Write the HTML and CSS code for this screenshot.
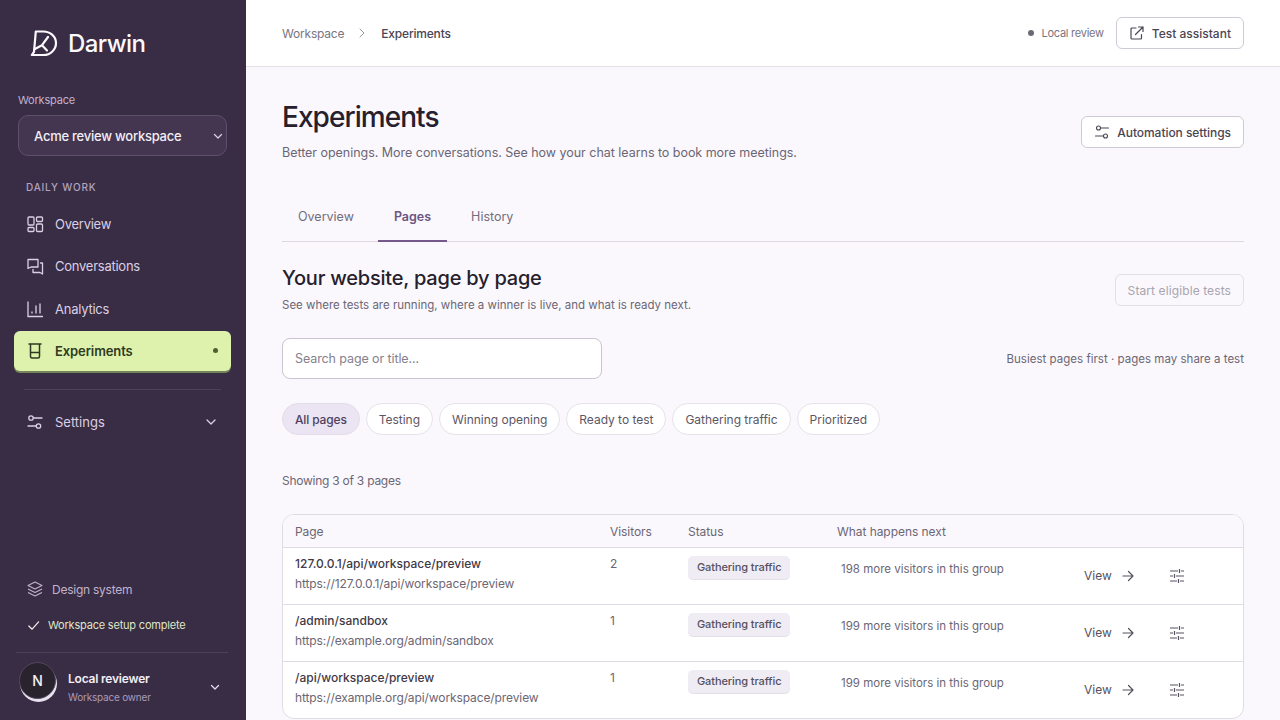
FILE: index.html
```html
<!DOCTYPE html>
<html lang="en">
<head>
<meta charset="utf-8">
<title>Experiments</title>
<link rel="stylesheet" href="styles.css">
</head>
<body>
<div class="app">
  <aside class="sidebar">
    <div class="brand">
      <svg class="logo" viewBox="0 0 28 28" fill="none" stroke="currentColor" stroke-width="2.2" stroke-linecap="round" stroke-linejoin="round"><path d="M5.800 2.500h7.500C20.500 2.500 26 7.500 26 14c0 6.500-5.500 12-12.500 12H1.800l2.200-3.200z"/><path d="M4.800 20 12 16.200 18 8M12 16.200l5 5.300"/></svg>
      <span class="brand-name">Darwin</span>
    </div>
    <div class="ws-label">Workspace</div>
    <div class="ws-select">
      <span>Acme review workspace</span>
      <svg class="ws-chev" viewBox="0 0 12 12" fill="none" stroke="currentColor" stroke-width="1.300" stroke-linecap="round" stroke-linejoin="round"><path d="M2.500 4.500 6 8l3.500-3.500"/></svg>
    </div>
    <div class="nav-group">DAILY WORK</div>
    <nav class="nav">
      <a class="nav-item"><svg class="nav-icon" viewBox="0 0 18 18" fill="none" stroke="currentColor" stroke-width="1.300"><rect x="2" y="2" width="6" height="8" rx="1"/><rect x="10.500" y="2" width="6" height="4.500" rx="1"/><rect x="2" y="12.500" width="6" height="4" rx="1"/><rect x="10.500" y="9" width="6" height="7.500" rx="1"/></svg><span>Overview</span></a>
      <a class="nav-item"><svg class="nav-icon" viewBox="0 0 18 18" fill="none" stroke="currentColor" stroke-width="1.300" stroke-linecap="round" stroke-linejoin="round"><path d="M2 2.500h10v7.500H5l-3 1.500z"/><path d="M14.500 6h2v11l-2.500-1.500H7v-3"/></svg><span>Conversations</span></a>
      <a class="nav-item"><svg class="nav-icon" viewBox="0 0 18 18" fill="none" stroke="currentColor" stroke-width="1.300" stroke-linecap="round"><path d="M2 2v14.500h14.500M6 13v-1M10 13V6M14 13V4"/></svg><span>Analytics</span></a>
      <a class="nav-item active"><svg class="nav-icon" viewBox="0 0 18 18" fill="none" stroke="currentColor" stroke-width="1.500" stroke-linecap="round" stroke-linejoin="round"><path d="M3 2h12M4.500 2v12.500a1.500 1.500 0 0 0 1.500 1.500h6a1.500 1.500 0 0 0 1.500-1.500V2M4.500 10.500h9"/></svg><span>Experiments</span><i class="nav-dot"></i></a>
    </nav>
    <div class="side-rule"></div>
    <a class="nav-item settings"><svg class="nav-icon" viewBox="0 0 18 18" fill="none" stroke="currentColor" stroke-width="1.300" stroke-linecap="round"><circle cx="5" cy="5" r="2.200"/><path d="M7.500 5h8.500M2 13h8"/><circle cx="12.500" cy="13" r="2.200"/></svg><span>Settings</span><svg class="set-chev" viewBox="0 0 12 12" fill="none" stroke="currentColor" stroke-width="1.300" stroke-linecap="round" stroke-linejoin="round"><path d="M2 4 6 8l4-4"/></svg></a>
    <div class="side-bottom">
      <a class="design"><svg class="design-icon" viewBox="0 0 18 18" fill="none" stroke="currentColor" stroke-width="1.100" stroke-linejoin="round"><path d="M9 2l7 3.500L9 9 2 5.500z"/><path d="M2 9l7 3.500L16 9M2 12.500 9 16l7-3.500"/></svg><span>Design system</span></a>
      <div class="setup"><svg class="setup-icon" viewBox="0 0 14 14" fill="none" stroke="currentColor" stroke-width="1.300" stroke-linecap="round" stroke-linejoin="round"><path d="M2 7.500 5.500 11 12.500 3"/></svg><span>Workspace setup complete</span></div>
      <div class="user">
        <div class="avatar"><span>N</span></div>
        <div class="user-text"><div class="user-name">Local reviewer</div><div class="user-role">Workspace owner</div></div>
        <svg class="user-chev" viewBox="0 0 12 12" fill="none" stroke="currentColor" stroke-width="1.300" stroke-linecap="round" stroke-linejoin="round"><path d="M2.500 4.500 6 8l3.500-3.500"/></svg>
      </div>
    </div>
  </aside>
  <div class="main">
    <header class="topbar">
      <div class="crumbs"><span>Workspace</span><svg class="crumb-sep" viewBox="0 0 10 10" fill="none" stroke="currentColor" stroke-width="1" stroke-linecap="round" stroke-linejoin="round"><path d="M3 1l4 4-4 4"/></svg><b>Experiments</b></div>
      <div class="top-right">
        <span class="local"><i></i>Local review</span>
        <a class="btn"><svg class="btn-icon" viewBox="0 0 16 16" fill="none" stroke="currentColor" stroke-width="1.200" stroke-linecap="round" stroke-linejoin="round"><path d="M7 3H3a1 1 0 0 0-1 1v9a1 1 0 0 0 1 1h8.500a1 1 0 0 0 1-1V9.500M6.500 9.500 14 2M9.500 2H14v4.500"/></svg>Test assistant</a>
      </div>
    </header>
    <main class="content">
      <div class="page-head">
        <div>
          <h1>Experiments</h1>
          <p class="lede">Better openings. More conversations. See how your chat learns to book more meetings.</p>
        </div>
        <a class="btn btn-auto"><svg class="btn-icon" viewBox="0 0 16 16" fill="none" stroke="currentColor" stroke-width="1.100" stroke-linecap="round"><circle cx="4.500" cy="4" r="2"/><path d="M7 4h7.500M1.500 12H9"/><circle cx="11.500" cy="12" r="2"/></svg>Automation settings</a>
      </div>
      <div class="tabs"><a class="tab">Overview</a><a class="tab on">Pages</a><a class="tab">History</a></div>
      <div class="sec-head">
        <div>
          <h2>Your website, page by page</h2>
          <p class="sec-sub">See where tests are running, where a winner is live, and what is ready next.</p>
        </div>
        <a class="btn btn-off">Start eligible tests</a>
      </div>
      <div class="tools">
        <div class="search">Search page or title...</div>
        <span class="sort">Busiest pages first · pages may share a test</span>
      </div>
      <div class="chips"><a class="chip on">All pages</a><a class="chip">Testing</a><a class="chip">Winning opening</a><a class="chip">Ready to test</a><a class="chip">Gathering traffic</a><a class="chip">Prioritized</a></div>
      <div class="count">Showing 3 of 3 pages</div>
      <div class="table">
        <div class="row head"><span>Page</span><span>Visitors</span><span>Status</span><span>What happens next</span></div>
        <div class="row">
          <div><div class="p-name">127.0.0.1/api/workspace/preview</div><div class="p-url">https://127.0.0.1/api/workspace/preview</div></div>
          <div class="num">2</div><div><span class="badge">Gathering traffic</span></div><div class="next">198 more visitors in this group</div>
          <a class="view">View<svg class="arrow" viewBox="0 0 14 14" fill="none" stroke="currentColor" stroke-width="1.200" stroke-linecap="round" stroke-linejoin="round"><path d="M2 7h10M7.500 2.500 12 7l-4.500 4.500"/></svg></a>
          <svg class="tune" viewBox="0 0 14 14" fill="none" stroke="currentColor" stroke-width="1.200"><path d="M0 2h8M11 2h3M0 7h3M6 7h8M0 12h7M10 12h4M9.500 0v4M4.500 5v4M8.500 10v4"/></svg>
        </div>
        <div class="row">
          <div><div class="p-name">/admin/sandbox</div><div class="p-url">https://example.org/admin/sandbox</div></div>
          <div class="num">1</div><div><span class="badge">Gathering traffic</span></div><div class="next">199 more visitors in this group</div>
          <a class="view">View<svg class="arrow" viewBox="0 0 14 14" fill="none" stroke="currentColor" stroke-width="1.200" stroke-linecap="round" stroke-linejoin="round"><path d="M2 7h10M7.500 2.500 12 7l-4.500 4.500"/></svg></a>
          <svg class="tune" viewBox="0 0 14 14" fill="none" stroke="currentColor" stroke-width="1.200"><path d="M0 2h8M11 2h3M0 7h3M6 7h8M0 12h7M10 12h4M9.500 0v4M4.500 5v4M8.500 10v4"/></svg>
        </div>
        <div class="row">
          <div><div class="p-name">/api/workspace/preview</div><div class="p-url">https://example.org/api/workspace/preview</div></div>
          <div class="num">1</div><div><span class="badge">Gathering traffic</span></div><div class="next">199 more visitors in this group</div>
          <a class="view">View<svg class="arrow" viewBox="0 0 14 14" fill="none" stroke="currentColor" stroke-width="1.200" stroke-linecap="round" stroke-linejoin="round"><path d="M2 7h10M7.500 2.500 12 7l-4.500 4.500"/></svg></a>
          <svg class="tune" viewBox="0 0 14 14" fill="none" stroke="currentColor" stroke-width="1.200"><path d="M0 2h8M11 2h3M0 7h3M6 7h8M0 12h7M10 12h4M9.500 0v4M4.500 5v4M8.500 10v4"/></svg>
        </div>
      </div>
    </main>
  </div>
</div>
</body>
</html>
```
FILE: styles.css
```css
* { box-sizing: border-box; }
html, body { margin: 0; height: 720px; overflow: hidden; }
body { font-family: Inter, "Noto Sans", sans-serif; background: #faf8fd; color: #2a2433; }
.app { display: flex; height: 720px; }
.sidebar { width: 246px; flex: none; background: #392c45; color: #d6cbe0; display: flex; flex-direction: column; padding: 0 15px 0 14px; }
.brand { display: flex; align-items: center; gap: 10px; height: 30px; margin: 28px 0 0 16px; color: #fbf9fd; }
.logo { width: 28px; height: 28px; }
.brand-name { font-size: 24px; font-weight: 500; letter-spacing: -0.6px; }
.ws-label { margin: 35px 0 0 4px; font-size: 11px; line-height: 14px; color: #c0b3cc; letter-spacing: -0.2px; }
.ws-select { margin: 8px 4px 0 4px; height: 41px; border: 1px solid #5e4f6c; border-radius: 10px; background: #443650; display: flex; align-items: center; justify-content: space-between; padding: 0 2px 0 15px; color: #f2eef6; font-size: 13px; font-weight: 500; letter-spacing: -0.24px; }
.ws-chev { width: 12px; height: 12px; color: #d6cbe0; }
.nav-group { margin: 25px 0 0 12px; font-size: 10px; line-height: 13px; font-weight: 500; letter-spacing: 0.8px; color: #b1a3be; }
.nav { margin-top: 8.500px; display: flex; flex-direction: column; }
.nav-item { display: flex; align-items: center; height: 42.500px; padding-left: 12px; font-size: 13px; color: #dad0e4; letter-spacing: -0.25px; }
.nav-icon { width: 18px; height: 18px; flex: none; margin-right: 11px; }
.nav-item.active { height: 40px; margin: 0.500px 0 1px; width: 217px; border-radius: 6px; background: #dff2ad; color: #2e3a22; font-weight: 600; box-shadow: 0 2px 0 #75855a; letter-spacing: -0.1px; }
.nav-dot { width: 5px; height: 5px; border-radius: 50%; background: #4c6131; margin-left: auto; margin-right: 13px; }
.side-rule { height: 1px; margin: 17px 10px 0; background: #4d4059; }
.nav-item.settings { margin-top: 11px; letter-spacing: 0; }
.set-chev { width: 12px; height: 12px; margin-left: auto; margin-right: 14px; }
.side-bottom { margin-top: auto; display: flex; flex-direction: column; }
.design { display: flex; align-items: center; padding-left: 12px; font-size: 12px; color: #c0b3cc; letter-spacing: -0.25px; }
.design-icon { width: 18px; height: 18px; margin-right: 8px; }
.setup { display: flex; align-items: center; margin-top: 20px; padding-left: 13px; font-size: 11px; color: #dfe6c6; letter-spacing: -0.2px; }
.setup-icon { width: 13px; height: 13px; margin-right: 8px; color: #f2f2ea; }
.user { margin: 20px 3px 0 2px; border-top: 1px solid #4d4059; height: 68px; display: flex; align-items: flex-start; padding: 0 0 0 3px; }
.avatar { width: 37px; height: 37px; margin-top: 9px; border-radius: 50%; background: #29232e; border: 1px solid #54475f; box-shadow: 1px 3px 0 #e8e1ee; display: flex; align-items: center; justify-content: center; color: #f4f1f6; font-size: 14px; font-weight: 500; flex: none; }
.user-text { margin: 18px 0 0 12px; flex: 1; }
.user-name { font-size: 12px; font-weight: 600; line-height: 16px; color: #f2eef6; letter-spacing: -0.2px; }
.user-role { font-size: 10px; line-height: 14px; margin-top: 3px; color: #ab9cb9; letter-spacing: -0.2px; }
.user-chev { width: 12px; height: 12px; margin: 28px 7px 0 0; color: #e4dcec; }
.main { flex: 1; min-width: 0; display: flex; flex-direction: column; }
.topbar { height: 67px; flex: none; background: #fff; border-bottom: 1px solid #e4e0e8; display: flex; align-items: center; justify-content: space-between; padding: 0 36px; }
.crumbs { display: flex; align-items: center; font-size: 12px; color: #7a7482; letter-spacing: -0.2px; }
.crumbs b { font-weight: 500; color: #4b4553; }
.crumb-sep { width: 10px; height: 10px; margin: 0 14px 0 13px; color: #9c96a3; }
.top-right { display: flex; align-items: center; gap: 12px; }
.local { display: flex; align-items: center; font-size: 11px; color: #7a7482; letter-spacing: -0.25px; }
.local i { width: 6px; height: 6px; border-radius: 50%; background: #6e6875; margin-right: 7px; }
.btn { display: flex; align-items: center; height: 32px; border: 1px solid #cfcad5; border-radius: 6px; background: #fff; padding: 0 12px; font-size: 12px; font-weight: 500; color: #4b4553; }
.btn-icon { width: 16px; height: 16px; margin-right: 7px; }
.content { flex: 1; padding: 0 36px; min-height: 0; }
.page-head { display: flex; justify-content: space-between; align-items: flex-start; padding-top: 33px; }
h1 { margin: 0; font-size: 28px; line-height: 34px; font-weight: 500; letter-spacing: -0.95px; color: #25202c; }
.lede { margin: 11px 0 0; font-size: 12.500px; line-height: 16px; color: #6c6674; letter-spacing: -0.03px; }
.btn-auto { margin-top: 16px; letter-spacing: -0.05px; }
.tabs { display: flex; gap: 8px; height: 48px; margin-top: 33px; border-bottom: 1px solid #ddd8e3; }
.tab { padding: 0 16px; height: 48px; line-height: 46px; font-size: 12.500px; color: #736d7b; }
.tab.on { color: #6d5481; font-weight: 600; border-bottom: 2px solid #75598a; }
.sec-head { display: flex; justify-content: space-between; align-items: flex-start; margin-top: 23px; }
h2 { margin: 0; font-size: 20px; line-height: 26px; font-weight: 500; letter-spacing: -0.22px; color: #25202c; }
.sec-sub { margin: 6px 0 0; font-size: 11.500px; line-height: 16px; color: #6c6674; }
.btn-off { margin-top: 9px; padding: 0 12px; color: #a9a4af; border-color: #e2dfe6; background: transparent; font-weight: 400; letter-spacing: 0.1px; }
.tools { display: flex; justify-content: space-between; align-items: center; margin-top: 25px; }
.search { width: 320px; height: 41px; border: 1px solid #c9c4cf; border-radius: 8px; background: #fff; display: flex; align-items: center; padding: 0 12px; font-size: 12.500px; color: #86808d; letter-spacing: -0.1px; }
.sort { font-size: 11.500px; color: #6c6674; letter-spacing: 0.02px; }
.chips { display: flex; gap: 6px; margin-top: 24px; }
.chip { height: 32px; display: flex; align-items: center; padding: 0 12px; border: 1px solid #e6e2ea; border-radius: 16px; background: #fff; font-size: 12px; color: #5c5664; letter-spacing: -0.02px; }
.chip.on { background: #ebe5f3; color: #4e3f5e; font-weight: 500; border-color: #e3ddea; letter-spacing: -0.15px; }
.count { margin-top: 38px; font-size: 12px; line-height: 16px; color: #6c6674; letter-spacing: -0.25px; }
.table { margin-top: 25px; border: 1px solid #e0dce5; border-radius: 12px; background: #fff; overflow: hidden; }
.row { display: grid; grid-template-columns: 315px 78px 149px 247px 86px 1fr; height: 57px; padding: 0 12px; border-top: 1px solid #e0dce5; align-items: start; font-size: 12px; color: #6c6674; }
.row.head { height: 32px; border-top: 0; background: #faf8fd; align-items: center; color: #6c6674; letter-spacing: -0.06px; }
.p-name { margin-top: 8px; font-weight: 500; line-height: 16px; color: #3f3947; }
.p-url { margin-top: 4px; line-height: 16px; color: #6c6674; letter-spacing: -0.1px; }
.num { margin-top: 8px; line-height: 16px; }
.badge { display: inline-block; margin-top: 8px; height: 23px; line-height: 22px; padding: 0 9px; border-radius: 5px; background: #efecf4; font-size: 11px; font-weight: 500; color: #56505e; box-shadow: 0 1px 0 #e3dfe8; letter-spacing: -0.1px; }
.next { margin: 13px 0 0 4px; line-height: 16px; font-size: 11.500px; color: #6c6674; }
.view { display: flex; align-items: center; margin-top: 20px; line-height: 16px; color: #56505e; }
.arrow { width: 14px; height: 14px; margin-left: 9px; }
.tune { width: 14px; height: 14px; margin-top: 21px; color: #56505e; }
```
